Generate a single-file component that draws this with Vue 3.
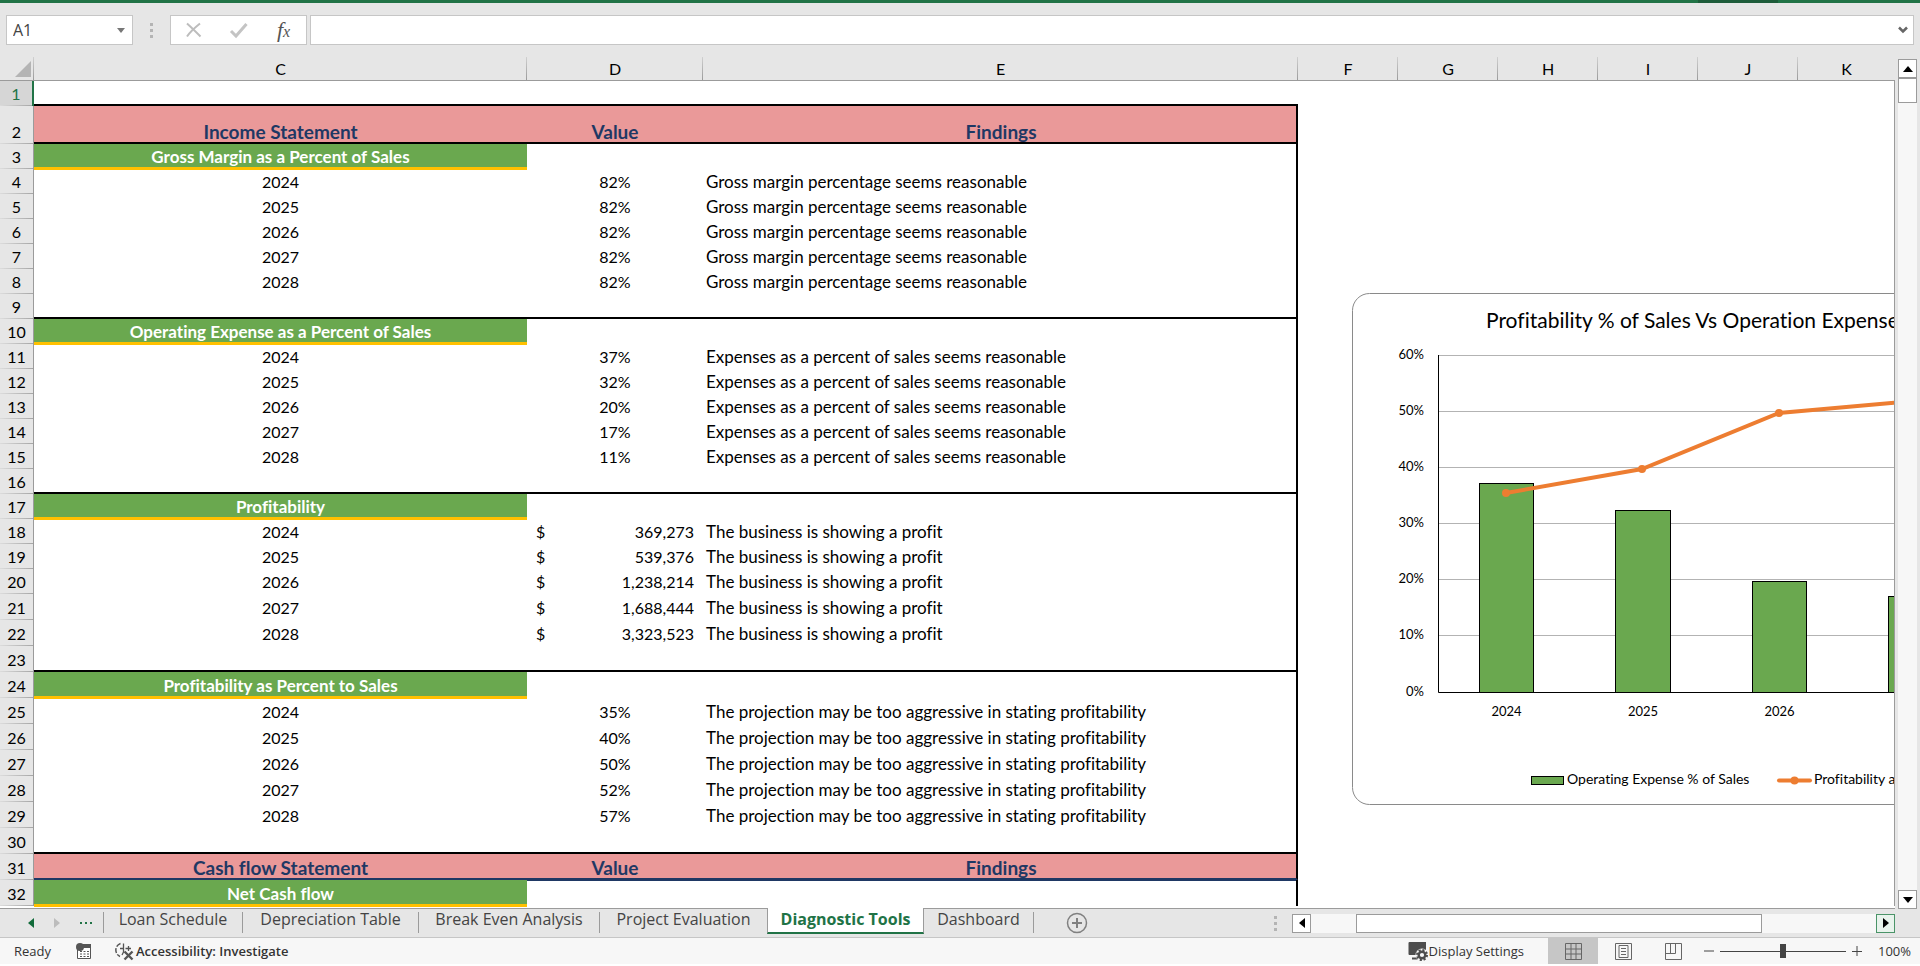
<script setup>
import { ref } from 'vue'

const columns = [
  { name: 'C', cls: 'col-c' },
  { name: 'D', cls: 'col-d' },
  { name: 'E', cls: 'col-e' },
  { name: 'F', cls: 'col-n' },
  { name: 'G', cls: 'col-n' },
  { name: 'H', cls: 'col-n' },
  { name: 'I', cls: 'col-n' },
  { name: 'J', cls: 'col-n' },
  { name: 'K', cls: 'col-rest' },
]

const years = ['2024', '2025', '2026', '2027', '2028']
const rows = []
const add = (row) => rows.push({ n: rows.length + 1, kind: 'data', ...row })
const section = (title, values, finding, money = false) => {
  add({ kind: 'section', c: title })
  years.forEach((year, i) => add({ c: year, d: values[i], e: finding, money }))
  add({ kind: 'last' })
}

add({ kind: 'last first' })
add({ kind: 'heading tall', c: 'Income Statement', d: 'Value', e: 'Findings' })
section('Gross Margin as a Percent of Sales', ['82%', '82%', '82%', '82%', '82%'], 'Gross margin percentage seems reasonable')
section('Operating Expense as a Percent of Sales', ['37%', '32%', '20%', '17%', '11%'], 'Expenses as a percent of sales seems reasonable')
section('Profitability', ['369,273', '539,376', '1,238,214', '1,688,444', '3,323,523'], 'The business is showing a profit', true)
section('Profitability as Percent to Sales', ['35%', '40%', '50%', '52%', '57%'], 'The projection may be too aggressive in stating profitability')
add({ kind: 'heading navy', c: 'Cash flow Statement', d: 'Value', e: 'Findings' })
add({ kind: 'section', c: 'Net Cash flow' })

const tabs = ['Loan Schedule', 'Depreciation Table', 'Break Even Analysis', 'Project Evaluation', 'Diagnostic Tools', 'Dashboard']
const activeTab = ref('Diagnostic Tools')
const cellName = ref('A1')
const formula = ref('')
const zoom = ref(100)

const ticks = [
  { label: '60%', y: 62 },
  { label: '50%', y: 118 },
  { label: '40%', y: 174 },
  { label: '30%', y: 230 },
  { label: '20%', y: 286 },
  { label: '10%', y: 342 },
]
const bars = [
  { year: '2024', x: 127, y: 190, w: 55 },
  { year: '2025', x: 263, y: 217, w: 56 },
  { year: '2026', x: 400, y: 288, w: 55 },
  { year: '', x: 536, y: 303, w: 55 },
]
const points = [[154, 200], [290, 176], [427, 120], [563, 108]]
</script>

<template>
  <div class="app">
    <div class="ribbon"><span class="ribbon-mark"></span></div>

    <div class="formula-bar">
      <div class="name-box">
        <input v-model="cellName" aria-label="Name box" />
        <button aria-label="Open name list">
          <svg width="8" height="5"><path d="M0 0h8l-4 5z" fill="#777" /></svg>
        </button>
      </div>
      <span class="grip"><i></i><i></i><i></i></span>
      <div class="fx-box">
        <button aria-label="Cancel">
          <svg width="18" height="18"><path d="M2 2.5C6 6 11 11 15.500 15.500M15 2.500C10 6.500 5 11 2 15.500" stroke="#bdbdbd" stroke-width="2" fill="none" /></svg>
        </button>
        <button aria-label="Enter">
          <svg width="20" height="18"><path d="M2 10l5 5L17.500 3" stroke="#c4c4c4" stroke-width="3" fill="none" /></svg>
        </button>
        <button class="fx" aria-label="Insert function"><em>f</em><em class="x">x</em></button>
      </div>
      <div class="formula">
        <input v-model="formula" aria-label="Formula" />
        <button aria-label="Expand formula bar">
          <svg width="10" height="8"><path d="M1 1.500l4 4 4-4" stroke="#666" stroke-width="2.500" fill="none" /></svg>
        </button>
      </div>
    </div>

    <div class="work">
      <div class="sheet">
        <table>
          <colgroup>
            <col class="col-head" />
            <col v-for="c in columns" :key="c.name" :class="c.cls" />
          </colgroup>
          <thead>
            <tr>
              <th class="corner" aria-label="Select all">
                <svg width="16" height="16"><path d="M16 0v16H0z" fill="#b4b4b4" /></svg>
              </th>
              <th v-for="c in columns" :key="c.name" scope="col">{{ c.name }}</th>
            </tr>
          </thead>
          <tbody>
            <tr v-for="r in rows" :key="r.n" :class="[r.kind, { roomy: r.n > 20 }]">
              <th scope="row" :class="{ selected: r.n === 1 }">{{ r.n }}</th>
              <td class="c">{{ r.c }}</td>
              <td v-if="r.money" class="d"><div class="money"><span>$</span><span>{{ r.d }}</span></div></td>
              <td v-else class="d">{{ r.d }}</td>
              <td class="e">{{ r.e }}</td>
              <td class="rest" colspan="6"></td>
            </tr>
          </tbody>
        </table>
        <div class="canvas">
          <svg class="chart" width="760" height="513" role="img" aria-label="Profitability and operating expense chart">
            <rect x="0.500" y="0.500" width="758" height="511" rx="17" fill="#fff" stroke="#8a8a8a" />
            <text x="134" y="35" class="chart-title">Profitability % of Sales Vs Operation Expenses</text>
            <g v-for="t in ticks" :key="t.label">
              <path :d="`M86 ${t.y}.5H740`" stroke="#b3b3b3" />
              <text x="72" :y="t.y + 4" text-anchor="end">{{ t.label }}</text>
            </g>
            <text x="72" y="403" text-anchor="end">0%</text>
            <g v-for="b in bars" :key="b.x">
              <rect :x="b.x + 0.5" :y="b.y + 0.5" :width="b.w - 1" :height="399 - b.y" fill="#6aa84f" stroke="#000" />
              <text v-if="b.year" :x="b.x + b.w / 2" y="423" text-anchor="middle">{{ b.year }}</text>
            </g>
            <path d="M86.500 62V399.500H740" fill="none" stroke="#000" />
            <polyline :points="points.join(' ')" fill="none" stroke="#ed7d31" stroke-width="4" />
            <circle v-for="p in points" :key="p[0]" :cx="p[0]" :cy="p[1]" r="4" fill="#ed7d31" />
            <rect x="179.500" y="483.500" width="32" height="8" fill="#6aa84f" stroke="#000" />
            <text x="215" y="491" class="legend">Operating Expense % of Sales</text>
            <path d="M427 487.500H458" stroke="#ed7d31" stroke-width="4" stroke-linecap="round" />
            <circle cx="442.500" cy="487.500" r="4" fill="#ed7d31" />
            <text x="462" y="491" class="legend">Profitability a</text>
          </svg>
        </div>
      </div>
      <div class="vscroll">
        <button aria-label="Scroll up"><svg width="10" height="6"><path d="M0 6l5-6 5 6z" /></svg></button>
        <div class="vthumb"></div>
        <div class="track"></div>
        <button aria-label="Scroll down"><svg width="10" height="6"><path d="M0 0l5 6 5-6z" /></svg></button>
      </div>
    </div>

    <div class="tab-bar">
      <div class="tab-nav">
        <button aria-label="Previous sheet"><svg width="6" height="10"><path d="M6 0v10L0 5z" fill="#116b3a" /></svg></button>
        <button aria-label="Next sheet"><svg width="6" height="10"><path d="M0 0v10l6-5z" fill="#bcbcbc" /></svg></button>
        <button class="more" aria-label="More sheets"><i></i><i></i><i></i></button>
      </div>
      <nav class="tabs">
        <button v-for="t in tabs" :key="t" :class="{ active: t === activeTab }" @click="activeTab = t">{{ t }}</button>
      </nav>
      <button class="add" aria-label="New sheet">
        <svg width="22" height="22" fill="none" stroke="#808080"><circle cx="11" cy="11" r="9.500" stroke-width="1.500" /><path d="M11 6v10M6 11h10" stroke-width="2" /></svg>
      </button>
      <span class="grip"><i></i><i></i><i></i></span>
      <div class="hscroll">
        <button aria-label="Scroll left"><svg width="6" height="10"><path d="M6 0v10L0 5z" /></svg></button>
        <div class="track before"></div>
        <div class="hthumb"></div>
        <div class="track"></div>
        <button class="hot" aria-label="Scroll right"><svg width="6" height="10"><path d="M0 0v10l6-5z" /></svg></button>
      </div>
    </div>

    <footer class="status">
      <span class="ready">Ready</span>
      <button class="macro" aria-label="Record macro">
        <svg width="16" height="16">
          <path d="M1.500 6v9.500h13V1.500H7" fill="#fff" stroke="#555" />
          <path d="M7 1h8v4H7z" fill="#555" />
          <circle cx="4" cy="4" r="4" fill="#555" />
          <path d="M4 8.500h9M4 11h9M4 13.500h9" stroke="#555" stroke-dasharray="2 1.500" />
        </svg>
      </button>
      <button class="access">
        <svg width="20" height="20" fill="none" stroke="#555">
          <path d="M6.500 2.500A7 7 0 0 0 6 15.500" stroke-width="1.500" stroke-dasharray="5 1.500" />
          <path d="M6 7.500h3.500v-5M9.500 7.500V11l-1.500 3M11.500 7.500H17M14.500 5v5" stroke-width="1.300" />
          <path d="M10.500 10.500l8 8M18.500 10.500l-8 8" stroke-width="2.400" />
        </svg>
        <span>Accessibility: Investigate</span>
      </button>
      <span class="spacer"></span>
      <button class="display">
        <svg width="20" height="19">
          <path d="M1.500 0H18v13H1.500a1 1 0 0 1-1-1V1a1 1 0 0 1 1-1z" fill="#4d4d4d" />
          <path d="M4 16.500h6" stroke="#4d4d4d" stroke-width="2" />
          <circle cx="14" cy="13" r="6.500" fill="#f7f7f7" />
          <circle cx="14" cy="13" r="3.300" fill="none" stroke="#4d4d4d" stroke-width="2.400" />
          <circle cx="14" cy="13" r="5" fill="none" stroke="#4d4d4d" stroke-width="2" stroke-dasharray="2.100 1.800" />
        </svg>
        <span>Display Settings</span>
      </button>
      <button class="view on" aria-label="Normal view">
        <svg width="17" height="17" fill="none" stroke="#666"><path d="M.5.5h16v16H.5zM.5 6h16M.5 11h16M6 .5v16M11 .5v16" /></svg>
      </button>
      <button class="view" aria-label="Page layout">
        <svg width="17" height="17" fill="none" stroke="#666"><path d="M.5.5h16v16H.5zM4 2.500h9v12H4zM6 5.500h5M6 8.500h5M6 11.500h5" /></svg>
      </button>
      <button class="view" aria-label="Page break preview">
        <svg width="17" height="17" fill="none" stroke="#666"><path d="M.5.5h16v16H.5zM.5 10.500H10.500V.5M5.500 .5v10" /></svg>
      </button>
      <button class="step" aria-label="Zoom out"><svg width="10" height="10"><path d="M0 5h10" stroke="#444" /></svg></button>
      <input v-model="zoom" class="zoom" type="range" min="0" max="200" aria-label="Zoom" />
      <button class="step" aria-label="Zoom in"><svg width="10" height="10"><path d="M0 5.500h10M5 0v10" stroke="#444" /></svg></button>
      <span class="percent">{{ zoom }}%</span>
    </footer>
  </div>
</template>

<style>
body {
  background: #fff;
}
</style>

<style scoped>
.app {
  display: flex;
  flex-direction: column;
  background: #e6e6e6;
  color: #000;
  font-family: 'Open Sans', 'Noto Sans', sans-serif;
  overflow: hidden;
}
.app * {
  box-sizing: border-box;
}
button,
input {
  margin: 0;
  padding: 0;
  border: 0;
  background: none;
  font: inherit;
  color: inherit;
}
button {
  display: flex;
  align-items: center;
  justify-content: center;
}
.ribbon {
  height: 3px;
  background: #217346;
  display: flex;
  justify-content: flex-end;
  padding-right: 142px;
}
.ribbon-mark {
  width: 80px;
  background: #1e5c3a;
}

/* formula bar */
.formula-bar {
  display: flex;
  padding: 12px 6px;
}
.name-box,
.fx-box,
.formula {
  display: flex;
  height: 30px;
  background: #fff;
  border: 1px solid #c6c6c6;
}
.name-box {
  width: 127px;
}
.name-box input {
  flex: 1;
  min-width: 0;
  padding-left: 6px;
  font-size: 16px;
  color: #444;
}
.name-box button {
  width: 22px;
}
.grip {
  display: flex;
  flex-direction: column;
  justify-content: center;
  align-items: center;
  gap: 3px;
  width: 37px;
}
.grip i {
  width: 3px;
  height: 3px;
  background: #b4b4b4;
}
.fx-box {
  width: 137px;
  align-items: center;
}
.fx-box button {
  flex: 1;
}
.fx {
  font-family: 'Liberation Serif', serif;
  font-size: 22px;
  line-height: 24px;
  color: #555;
}
.fx .x {
  font-size: 16px;
  padding-top: 4px;
}
.formula {
  flex: 1;
  margin-left: 3px;
}
.formula input {
  flex: 1;
  min-width: 0;
  padding-left: 6px;
  font-size: 16px;
}
.formula button {
  width: 20px;
}

/* sheet */
.work {
  display: flex;
}
.sheet {
  position: relative;
  flex: 1;
  min-width: 0;
  overflow: hidden;
  padding-bottom: 2px;
  border-bottom: 1px solid #9b9b9b;
  background: #fff;
}
table {
  width: 100%;
  table-layout: fixed;
  border-collapse: separate;
  border-spacing: 0;
  font-family: Lato, sans-serif;
  font-size: 16px;
  font-variant-ligatures: none;
  line-height: 20px;
}
.col-head {
  width: 34px;
}
.col-c {
  width: 493px;
}
.col-d {
  width: 176px;
}
.col-e {
  width: 595px;
}
.col-n {
  width: 100px;
}
th,
td {
  padding: 0 0 2px;
  vertical-align: bottom;
  text-align: center;
  white-space: nowrap;
}
thead th {
  height: 24px;
  padding-bottom: 1px;
  font-weight: 400;
  background: linear-gradient(#d0d0d0, #9b9b9b) right / 1px 100% no-repeat #e6e6e6;
  border-bottom: 1px solid #9b9b9b;
}
thead th:last-child {
  background: #e6e6e6;
}
thead .corner {
  padding: 0 3px 3px 0;
  text-align: right;
}
.corner svg {
  display: block;
  margin-left: auto;
}
tbody tr {
  height: 25px;
}
tbody tr.roomy {
  height: 26px;
}
tbody tr.tall {
  height: 38px;
}
tbody th {
  font-weight: 400;
  background: linear-gradient(90deg, #dcdcdc, #a6a6a6) bottom / 100% 1px no-repeat #e6e6e6;
  border-right: 1px solid #9b9b9b;
}
tbody th.selected {
  color: #217346;
  background-color: #d6d6d6;
  border-right: 2px solid #217346;
}
td.e {
  padding-left: 3px;
  font-size: 17px;
  text-align: left;
  border-right: 2px solid #000;
}
td.rest {
  border-right: 1px solid #9b9b9b;
}
.first td.e {
  border-right: 0;
}
.money {
  display: flex;
  justify-content: space-between;
  padding: 0 9px 0 9px;
}
.last td:not(.rest),
.heading td:not(.rest) {
  padding-bottom: 0;
  border-bottom: 2px solid #000;
}
.heading td:not(.rest) {
  background: #ea9999;
  color: #1f3864;
  font-size: 19px;
  font-weight: 700;
  text-align: center;
}
.navy td:not(.rest) {
  border-bottom-color: #1f3864;
  box-shadow: 0 1px 0 #1f3864;
}
.section td.c {
  padding-bottom: 0;
  background: #6aa84f;
  color: #fff;
  font-size: 17px;
  font-weight: 700;
  border-bottom: 2px solid #ffc000;
  box-shadow: 0 1px 0 #ffc000;
}
.canvas {
  position: absolute;
  inset: 24px 1px 0 0;
  overflow: hidden;
  pointer-events: none;
}
.chart {
  position: absolute;
  left: 1352px;
  top: 212px;
  font-family: Lato, sans-serif;
  font-size: 13px;
  font-variant-ligatures: none;
}
.chart-title {
  font-size: 21px;
}
.legend {
  font-size: 14px;
}

/* scroll bars */
.vscroll {
  display: flex;
  flex-direction: column;
  width: 19px;
  margin: 2px 3px 0;
}
.vscroll button,
.hscroll button {
  flex: none;
  width: 19px;
  height: 19px;
  background: #fff;
  border: 1px solid #9b9b9b;
}
.vthumb {
  height: 25px;
  background: #fff;
  border: 1px solid #9b9b9b;
}
.track {
  flex: 1;
  background: #f7f7f7;
}
.hscroll {
  display: flex;
  width: 603px;
  height: 19px;
}
.hscroll .before {
  flex: none;
  width: 45px;
}
.hthumb {
  width: 406px;
  background: #fff;
  border: 1px solid #9b9b9b;
}
.hscroll .hot {
  background: #e8f3ec;
  border-color: #4a9468;
}

/* sheet tabs */
.tab-bar {
  display: flex;
  align-items: center;
  height: 28px;
  padding-right: 25px;
}
.tab-nav {
  display: flex;
  gap: 20px;
  width: 103px;
  padding-left: 28px;
}
.tab-nav .more {
  gap: 3px;
}
.more i {
  width: 2px;
  height: 2px;
  background: #217346;
}
.tabs {
  display: grid;
  grid-template-columns: 140px 176px 181px 167px 157px 110px;
  align-self: stretch;
}
.tabs button {
  height: 21px;
  margin-top: 3px;
  padding-bottom: 8px;
  font-size: 16px;
  line-height: 20px;
  white-space: nowrap;
  color: #444;
  border-right: 1px solid #9b9b9b;
}
.tabs button:first-child {
  border-left: 1px solid #9b9b9b;
}
.tabs button:nth-child(4) {
  border-right: 0;
}
.tabs .active {
  position: relative;
  height: 26px;
  margin-top: -1px;
  padding: 0 0 2px;
  background: #fff;
  color: #217346;
  font-weight: 700;
  border-left: 1px solid #9b9b9b;
  border-bottom: 2px solid #217346;
}
.add {
  margin-left: 32px;
}
.tab-bar .grip {
  margin-left: auto;
  width: 34px;
}

/* status bar */
.status {
  display: flex;
  align-items: center;
  height: 27px;
  padding: 0 11px 0 14px;
  background: #f7f7f7;
  border-top: 1px solid #c6c6c6;
  font-size: 13px;
  color: #333;
}
.ready {
  width: 62px;
}
.macro {
  width: 16px;
}
.access {
  margin-left: 22px;
  gap: 2px;
  font-weight: 600;
}
.spacer {
  flex: 1;
}
.display {
  gap: 1px;
  margin-right: 24px;
}
.view {
  width: 50px;
  height: 26px;
}
.view.on {
  background: #c6c6c6;
}
.step {
  width: 10px;
  margin-left: 6px;
}
.zoom {
  appearance: none;
  width: 126px;
  height: 14px;
  margin-left: 6px;
  background: linear-gradient(#444, #444) center / 100% 1px no-repeat;
}
.zoom::-webkit-slider-thumb {
  appearance: none;
  width: 6px;
  height: 14px;
  background: #444;
}
.percent {
  margin-left: 16px;
  width: 31px;
  text-align: right;
  white-space: nowrap;
}
</style>
